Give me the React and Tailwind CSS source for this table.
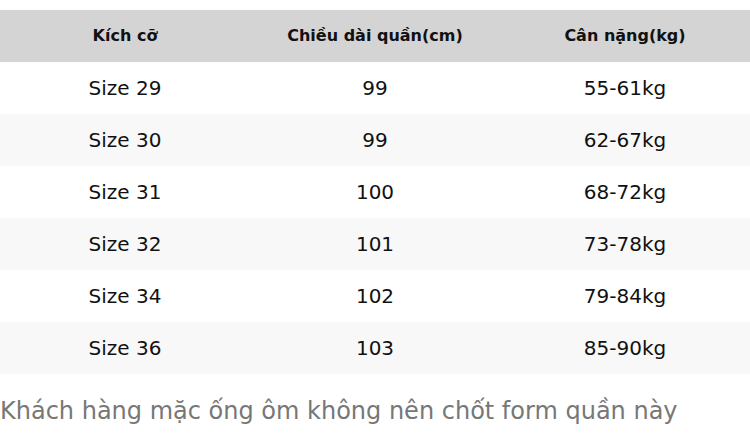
const rows = [
  ['Size 29', '99', '55-61kg'],
  ['Size 30', '99', '62-67kg'],
  ['Size 31', '100', '68-72kg'],
  ['Size 32', '101', '73-78kg'],
  ['Size 34', '102', '79-84kg'],
  ['Size 36', '103', '85-90kg'],
]

export default function App() {
  return (
    <div className="w-[750px] h-[446px] bg-white pt-[10px] overflow-hidden" style={{ fontFamily: '"DejaVu Sans", sans-serif' }}>
      <div className="grid grid-cols-3 h-[52px] bg-[#d4d4d4] items-center text-center text-[16px] font-bold text-[#111]">
        <div>Kích cỡ</div>
        <div>Chiều dài quần(cm)</div>
        <div>Cân nặng(kg)</div>
      </div>
      {rows.map((r, i) => (
        <div key={r[0]} className={`grid grid-cols-3 h-[52px] items-center text-center text-[20px] text-[#111] ${i % 2 ? 'bg-[#f8f8f8]' : 'bg-white'}`}>
          {r.map((c, j) => <div key={j}>{c}</div>)}
        </div>
      ))}
      <p className="mt-[22px] text-[24px] leading-[30px] text-[#777]">Khách hàng mặc ống ôm không nên chốt form quần này</p>
    </div>
  )
}
